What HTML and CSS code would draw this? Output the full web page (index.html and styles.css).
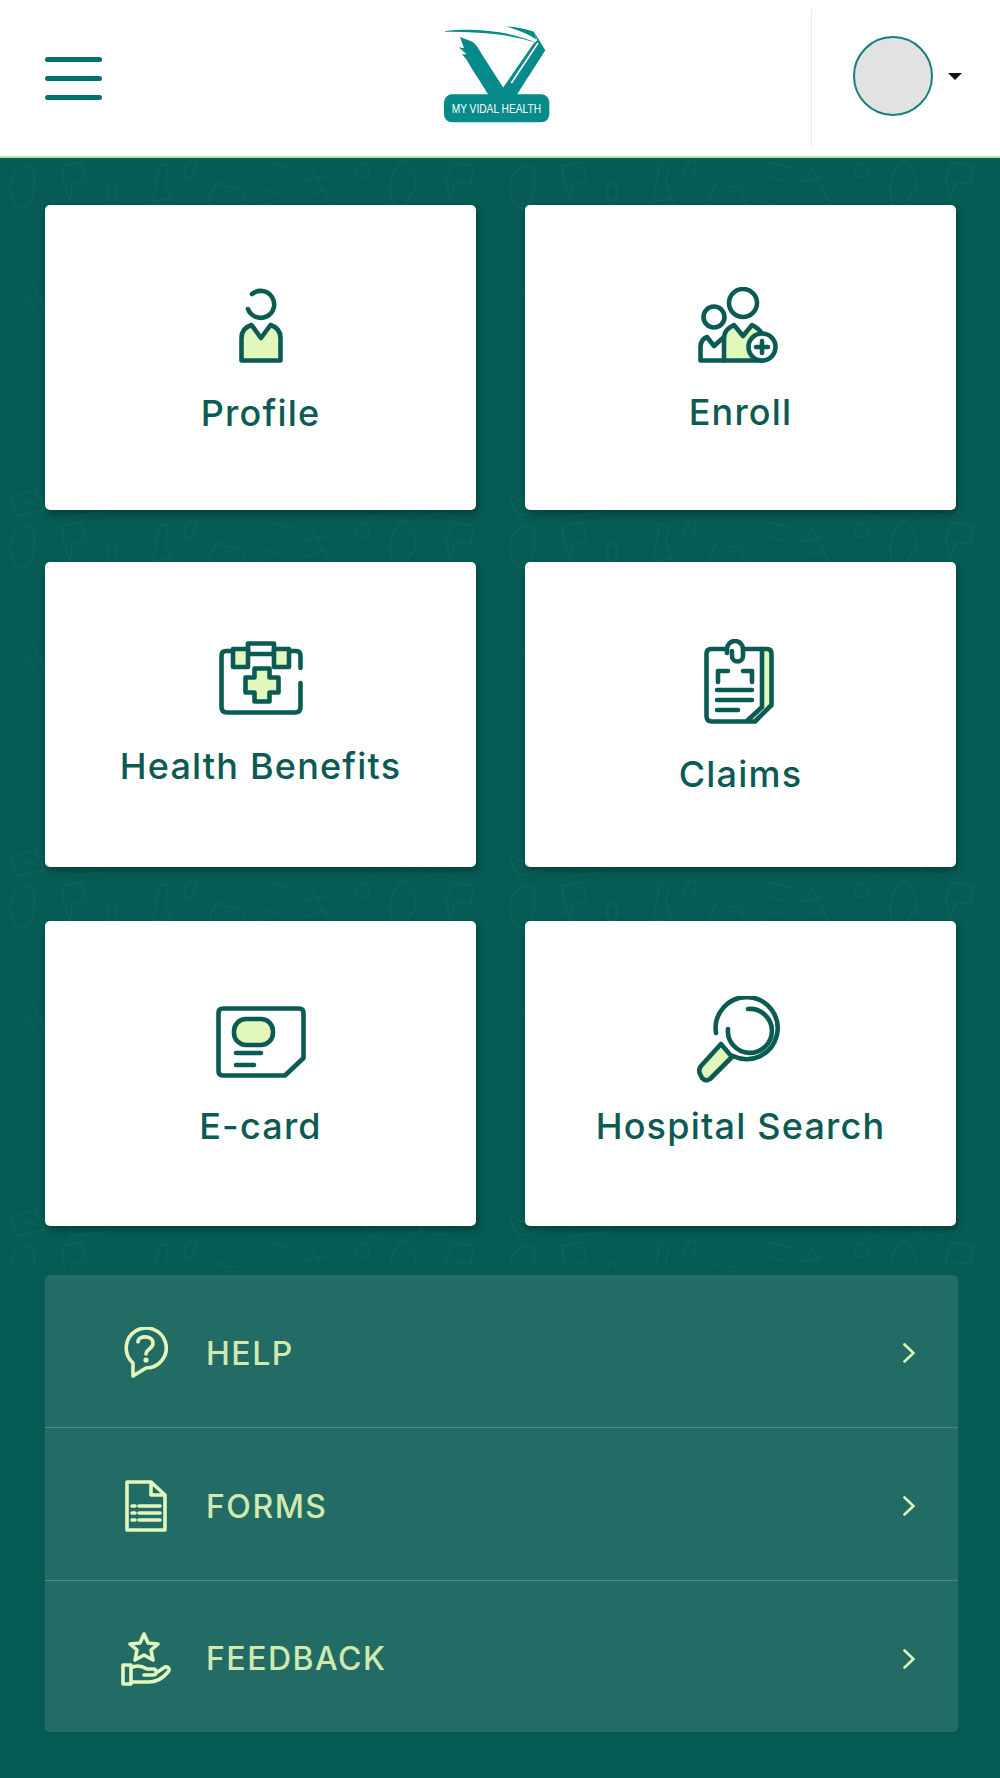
FILE: index.html
```html
<!DOCTYPE html>
<html lang="en">
<head>
    <meta charset="UTF-8">
    <meta name="viewport" content="width=device-width, initial-scale=1.0">
    <title>My Vidal Health</title>
    <link rel="stylesheet" href="styles.css">
</head>
<body>
    <header class="topbar">
        <button class="menu-btn" aria-label="Menu"><span></span><span></span><span></span></button>
        <svg class="logo" viewBox="0 0 480 375" width="160" height="125">
            <path class="logo-wing" d="M120 84 L150 95 C165 100 175 115 185 135 L250 236 L268 260 L205 258 C190 230 165 195 150 170 L140 152 L126 136 L140 136 L116 115 L132 118 Z"/>
            <path class="logo-wing" d="M248 238 L340 104 L352 94 L342 68 L376 124 L290 258 L250 258 Z"/>
            <path class="logo-cut" d="M354 102 L274 222"/>
            <path class="logo-wing" d="M75 66 C160 55 270 66 350 102 C270 74 170 68 75 68 Z"/>
            <path class="logo-wing" d="M258 52 C290 54 320 60 342 68 L350 92 C320 72 290 62 258 52 Z"/>
            <rect class="logo-plate" x="72" y="256" width="316" height="84" rx="24"/>
            <text class="logo-text" x="229" y="313" text-anchor="middle" textLength="268" lengthAdjust="spacingAndGlyphs">MY VIDAL HEALTH</text>
        </svg>
        <div class="topbar-divider"></div>
        <div class="avatar"></div>
        <div class="caret"></div>
    </header>

    <main class="home">
        <svg class="doodles" width="1000" height="1110" aria-hidden="true">
            <defs>
                <pattern id="doodle-tile" width="500" height="360" patternUnits="userSpaceOnUse">
                    <g class="doodle">
                        <path d="M20 10 C5 20 8 48 22 50 C32 50 36 30 34 12 C30 6 24 6 20 10Z"/>
                        <path d="M62 8 L82 4 L86 22 L72 26 L70 44 L64 24 Z"/>
                        <ellipse cx="112" cy="34" rx="5" ry="9"/>
                        <path d="M160 6 L168 8 L166 26 L176 52 L150 58 L156 26 Z M153 44 L172 40"/>
                        <ellipse cx="190" cy="12" rx="5" ry="10" transform="rotate(20 190 12)"/>
                        <path d="M210 60 C206 30 220 18 226 30 C240 22 250 40 244 62"/>
                        <path d="M268 4 L292 10 M264 16 L286 24 M260 30 L280 36 M262 42 L274 48"/>
                        <path d="M310 8 L332 48 M300 24 L326 18 M306 38 L334 30 M318 48 L342 52"/>
                        <circle cx="362" cy="12" r="7"/>
                        <path d="M402 2 C388 18 386 40 398 52 C410 54 404 36 414 34 C420 22 412 8 402 2Z"/>
                        <path d="M452 4 L474 8 L470 26 L456 24 L450 42 L446 20 Z"/>
                        <circle cx="146" cy="120" r="19"/><circle cx="146" cy="120" r="13"/><path d="M132 120 L160 120 M138 108 L152 132"/>
                        <path d="M30 120 L44 150 M22 132 L40 160"/>
                        <path d="M10 340 L36 332 L44 352 L18 358Z M18 342 L34 346"/>
                        <path d="M68 342 L90 330 L112 340 L108 354 L72 358Z"/>
                        <path d="M370 326 L392 332 M404 330 L420 322 M374 344 a8 8 0 1 0 .1 0 M414 340 a8 8 0 1 0 .1 0 M384 348 H406"/>
                        <circle cx="440" cy="344" r="20"/><circle cx="440" cy="344" r="13"/><circle cx="440" cy="344" r="6"/>
                        <path d="M290 332 L296 346 M284 340 L302 338 M285 348 L300 332"/>
                        <circle cx="294" cy="230" r="6"/><path d="M288 230 H300"/>
                    </g>
                </pattern>
            </defs>
            <rect width="1000" height="1110" fill="url(#doodle-tile)"/>
        </svg>

        <section class="cards">
            <a class="card">
                <svg class="card-icon icon-profile" viewBox="0 0 44 75" width="44" height="75">
                    <path class="ln" d="M13 6 A13.5 13.5 0 1 1 9 21"/>
                    <path class="ln lt" stroke-linejoin="miter" d="M2.5 72.5 V50 C2.5 44 6 39 12.5 37 L22 50 L31.5 37 C38 39 41.5 44 41.5 50 V72.5 Z"/>
                </svg>
                <span class="card-label">Profile</span>
            </a>
            <a class="card">
                <svg class="card-icon icon-enroll" viewBox="0 0 80 76" width="80" height="76">
                    <circle class="ln" cx="45" cy="16" r="14"/>
                    <circle class="ln" cx="16" cy="30" r="10.5"/>
                    <path class="ln" d="M26 50 L16 59 L9 50 C4 52 2.5 55 2.5 60 V73.5 H26"/>
                    <path class="ln lt" d="M26 73.5 V52 C26 44 30 41 36 38 L45 49 L54 38 C60 41 64 44 65 50 V73.5 Z"/>
                    <circle class="ln wh" cx="64" cy="60" r="13.5"/>
                    <path class="ln" d="M64 54 V66 M58 60 H70"/>
                </svg>
                <span class="card-label">Enroll</span>
            </a>
            <a class="card">
                <svg class="card-icon icon-kit" viewBox="0 0 84 74" width="84" height="74">
                    <path class="ln" d="M14 10 H7 Q2.5 10 2.5 15 V66 Q2.5 71.5 8 71.5 H76 Q81.5 71.5 81.5 66 V42 M81.5 27 V15 Q81.5 10 77 10 H70"/>
                    <path class="ln" d="M29 13 V2.5 H55 V13 M29 13 H55"/>
                    <rect class="ln lt" x="14" y="8" width="15" height="18"/>
                    <rect class="ln lt" x="55" y="8" width="15" height="18"/>
                    <path class="ln lt" d="M35.5 27.5 H50.5 V36.5 H59.5 V51.5 H50.5 V60.5 H35.5 V51.5 H26.5 V36.5 H35.5 Z"/>
                </svg>
                <span class="card-label">Health Benefits</span>
            </a>
            <a class="card">
                <svg class="card-icon icon-claims" viewBox="0 0 70 85" width="70" height="85">
                    <path class="lt-only" d="M58 10 H67 V66 L51 82 L44 80 L58 68 Z"/>
                    <path class="ln" d="M21 10 H7 Q2.5 10 2.5 15 V77 Q2.5 82.5 8 82.5 H51 L67.5 66 V15 Q67.5 10 63 10 H39"/>
                    <path class="ln" d="M58 10 V68 L44 81"/>
                    <path class="ln" d="M23 14 V10 A8 8 0 0 1 39 10 V17 A5.5 5.5 0 0 1 28 17 V12"/>
                    <path class="ln" stroke-linecap="butt" d="M14 43 V32 H24 M39 32 H48 V43"/>
                    <path class="ln" stroke-linecap="butt" d="M13 51 H48 M13 61 H48 M13 71 H34"/>
                </svg>
                <span class="card-label">Claims</span>
            </a>
            <a class="card">
                <svg class="card-icon icon-ecard" viewBox="0 0 90 72" width="90" height="72">
                    <path class="ln" d="M7 2.5 H83 Q87.5 2.5 87.5 7 V52 L69 69.5 H7 Q2.5 69.5 2.5 65 V7 Q2.5 2.5 7 2.5 Z"/>
                    <rect class="ln lt" x="18" y="13" width="39" height="26" rx="12"/>
                    <path class="ln" stroke-linecap="butt" d="M20 47 H45 M20 59 H38"/>
                </svg>
                <span class="card-label">E-card</span>
            </a>
            <a class="card">
                <svg class="card-icon icon-search" viewBox="0 0 88 88" width="88" height="88">
                    <path class="ln" d="M19 37 A31 31 0 1 1 36 60"/>
                    <path class="ln" d="M51 13 A22 22 0 1 1 31 33"/>
                    <path class="ln lt" d="M24 48 L35 61 L13 83 Q9 86 5 82 L3 78 Q1 74 4 70 Z"/>
                </svg>
                <span class="card-label">Hospital Search</span>
            </a>
        </section>

        <section class="links">
            <a class="link-row">
                <span class="link-icon">
                    <svg viewBox="0 0 46 52" width="46" height="52">
                        <path class="ln-light" d="M10 49 V36 A20 20 0 1 1 23 41 Z"/>
                        <path class="ln-light" d="M15 15 C15 8 30 8 30 16 C30 22 23 22 23 27"/>
                        <circle class="dot-light" cx="23" cy="33" r="2.6"/>
                    </svg>
                </span>
                <span class="link-label">HELP</span>
                <svg class="chev" viewBox="0 0 12 20" width="12" height="20"><path d="M1.5 1.5 L10.5 10 L1.5 18.5"/></svg>
            </a>
            <a class="link-row">
                <span class="link-icon">
                    <svg viewBox="0 0 42 52" width="42" height="52">
                        <path class="ln-light" stroke-linejoin="miter" d="M2 2 H26 L40 15 V50 H2 Z M26 2 V15 H40"/>
                        <path class="ln-light" stroke-linecap="butt" d="M14 26 H35 M14 33 H35 M14 40 H35 M7 26 H10 M7 33 H10 M7 40 H10"/>
                    </svg>
                </span>
                <span class="link-label">FORMS</span>
                <svg class="chev" viewBox="0 0 12 20" width="12" height="20"><path d="M1.5 1.5 L10.5 10 L1.5 18.5"/></svg>
            </a>
            <a class="link-row">
                <span class="link-icon">
                    <svg viewBox="0 0 50 54" width="50" height="54">
                        <path class="ln-light" d="M23 2 L27 11 L37 12 L30 18 L32 28 L23 23 L14 28 L16 18 L9 12 L19 11 Z"/>
                        <path class="ln-light" stroke-linejoin="miter" d="M2 33 H10 V52 H2 Z"/>
                        <path class="ln-light" d="M10 36 C16 32 21 34 26 37 H33 C36 38 36 43 32 43 H23 M35 41 L44 35 C48 34 49 38 47 40 C42 46 36 50 28 50 H10"/>
                    </svg>
                </span>
                <span class="link-label">FEEDBACK</span>
                <svg class="chev" viewBox="0 0 12 20" width="12" height="20"><path d="M1.5 1.5 L10.5 10 L1.5 18.5"/></svg>
            </a>
        </section>
    </main>
</body>
</html>
```

FILE: styles.css
```css
* {
    box-sizing: border-box;
}

body {
    font-family: Inter, "Noto Sans", sans-serif;
    background: #065b54;
    margin: 0;
    padding: 0;
}

.topbar {
    display: flex;
    align-items: center;
    height: 158px;
    background: white;
    border-bottom: 2px solid #c5e29a;
}

.menu-btn {
    display: flex;
    flex-direction: column;
    gap: 14px;
    width: 57px;
    margin-left: 45px;
    padding: 0;
    background: none;
    border: none;
}

.menu-btn span {
    display: block;
    height: 5px;
    border-radius: 3px;
    background: #06706d;
}

.logo {
    margin-left: 318px;
    margin-top: -13px;
}

.logo-wing {
    fill: #068a8a;
}

.logo-cut {
    fill: none;
    stroke: white;
    stroke-width: 5px;
}

.logo-plate {
    fill: #068a8a;
}

.logo-text {
    fill: white;
    font-family: "Liberation Sans", sans-serif;
    font-size: 38px;
}

.topbar-divider {
    width: 1px;
    height: 136px;
    margin-left: 231px;
    margin-top: -1px;
    background: #e9e9e9;
}

.avatar {
    width: 80px;
    height: 80px;
    margin-left: 41px;
    margin-top: -4px;
    border-radius: 50%;
    background: #e2e2e2;
    border: 2px solid #15807c;
}

.caret {
    width: 0;
    height: 0;
    margin-left: 15px;
    margin-top: -4px;
    border-left: 7px solid transparent;
    border-right: 7px solid transparent;
    border-top: 7px solid #111;
}

.home {
    position: relative;
    padding: 47px 42px 47px 45px;
}

.doodles {
    position: absolute;
    top: 0;
    left: 0;
}

.doodle {
    fill: none;
    stroke: #0b635b;
    stroke-width: 1.3px;
}

.cards {
    position: relative;
    display: grid;
    grid-template-columns: 431px 431px;
    grid-template-rows: 305px 305px 307px;
    column-gap: 49px;
    row-gap: 52px;
}

.card {
    display: flex;
    flex-direction: column;
    align-items: center;
    background: white;
    border-radius: 5px;
    box-shadow: 2px 4px 7px rgba(0, 0, 0, 0.3);
}

.card:nth-child(n+5) {
    margin-top: 2px;
}

.card-label {
    font-size: 36px;
    font-weight: 500;
    line-height: 44px;
    color: #0b5b54;
    letter-spacing: 1.2px;
}

.icon-profile {
    margin-top: 83px;
    margin-bottom: 28px;
}

.icon-enroll {
    margin-top: 82px;
    margin-right: 6px;
    margin-bottom: 27px;
}

.icon-kit {
    margin-top: 79px;
    margin-bottom: 29px;
}

.icon-claims {
    margin-top: 77px;
    margin-bottom: 28px;
    margin-right: 3px;
}

.icon-ecard {
    margin-top: 85px;
    margin-bottom: 26px;
}

.icon-search {
    margin-top: 75px;
    margin-bottom: 20px;
}

.ln {
    fill: none;
    stroke: #0b5b54;
    stroke-width: 4.6px;
    stroke-linecap: round;
    stroke-linejoin: round;
}

.lt {
    fill: #e2f7bb;
}

.wh {
    fill: white;
}

.lt-only {
    fill: #e2f7bb;
}

.links {
    position: relative;
    width: 913px;
    margin-top: 49px;
    border-radius: 5px;
    background: #236c65;
}

.link-row {
    display: flex;
    align-items: center;
    height: 153px;
    padding-top: 4px;
    padding-left: 76px;
    border-bottom: 1px solid #4d8a76;
}

.link-row:last-child {
    height: 151px;
    border-bottom: none;
}

.link-icon {
    display: flex;
    justify-content: center;
    width: 50px;
    margin-right: 35px;
}

.link-label {
    flex: 1;
    font-size: 32px;
    font-weight: 500;
    letter-spacing: 1.5px;
    color: #cfe9ae;
}

.chev {
    margin-right: 43px;
    fill: none;
    stroke: #e2f7bb;
    stroke-width: 2.6px;
    stroke-linecap: round;
}

.ln-light {
    fill: none;
    stroke: #e2f7bb;
    stroke-width: 3.6px;
    stroke-linecap: round;
    stroke-linejoin: round;
}

.dot-light {
    fill: #e2f7bb;
}
```
